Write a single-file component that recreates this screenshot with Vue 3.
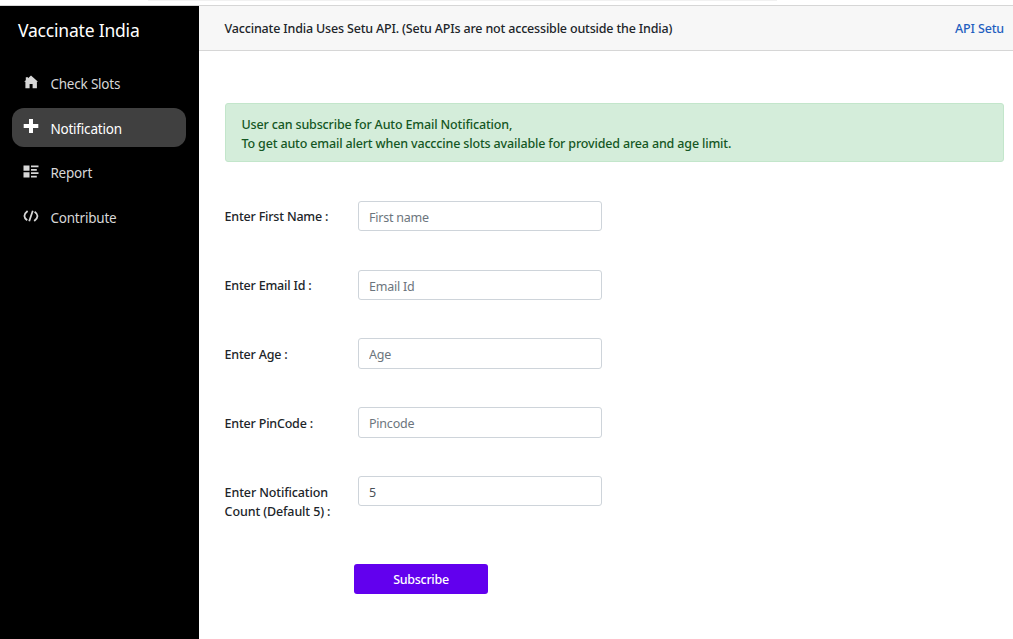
<script setup>
import { ref } from 'vue'

const links = [
  { name: 'Check Slots', icon: 'home', cls: 'slots' },
  { name: 'Notification', icon: 'plus', cls: 'notification', active: true },
  { name: 'Report', icon: 'report', cls: 'report' },
  { name: 'Contribute', icon: 'code', cls: 'contribute' },
]

const fields = ref([
  { id: 'first', label: 'Enter First Name :', placeholder: 'First name', value: '' },
  { id: 'email', label: 'Enter Email Id :', placeholder: 'Email Id', value: '' },
  { id: 'age', label: 'Enter Age :', placeholder: 'Age', value: '' },
  { id: 'pin', label: 'Enter PinCode :', placeholder: 'Pincode', value: '' },
  { id: 'count', label: 'Enter Notification Count (Default 5) :', placeholder: '', value: '5' },
])
</script>

<template>
  <div class="page">
    <div class="edge"><div class="edge-strip"></div></div>
    <div class="shell">
      <aside class="sidebar">
        <div class="brand"><span>Vaccinate India</span></div>
        <nav>
          <a v-for="l in links" :key="l.name" class="link" :class="[l.cls, { active: l.active }]">
            <svg class="icon" width="16" height="16" viewBox="0 0 16 16" fill="currentColor">
              <path v-if="l.icon === 'home'" d="M8 1.4 L15 7.8 H13.9 V14.2 H9.6 V10 H6.6 V14.2 H2.4 V7.8 H1.2 L2.8 6.2 V3.2 H5 V4.2 Z" />
              <path v-else-if="l.icon === 'plus'" d="M6 1 H10 V6 H15.3 V10 H10 V15 H6 V10 H0.7 V6 H6 Z" />
              <path v-else-if="l.icon === 'report'" d="M.5 2.5H6.5V7.8H.5ZM.5 9.2H6.5V14.5H.5ZM8 2.5H15.5V4.3H8ZM8 6H13.8V7.8H8ZM8 9.2H15.5V11H8ZM8 12.7H13.8V14.5H8Z" />
              <path v-else d="M4.6 3 Q1.4 5.5 1.4 8 Q1.4 10.2 4.2 12.3 M9.8 2.7 L6.2 13.3 M11.6 3.7 Q14.5 5.8 14.5 8 Q14.5 10.5 11.2 13" fill="none" stroke="currentColor" stroke-width="1.8" />
            </svg>
            <span>{{ l.name }}</span>
          </a>
        </nav>
      </aside>
      <main class="main">
        <header class="topbar">
          <span class="notice">Vaccinate India Uses Setu API. (Setu APIs are not accessible outside the India)</span>
          <a class="api">API Setu</a>
        </header>
        <section class="content">
          <div class="alert">
            <div class="first-line">User can subscribe for Auto Email Notification,</div>
            <div class="second-line">To get auto email alert when vacccine slots available for provided area and age limit.</div>
          </div>
          <form @submit.prevent>
            <div v-for="f in fields" :key="f.id" class="row" :class="f.id">
              <label :for="f.id">{{ f.label }}</label>
              <input :id="f.id" v-model="f.value" type="text" :placeholder="f.placeholder" />
            </div>
            <button type="submit">Subscribe</button>
          </form>
        </section>
      </main>
    </div>
  </div>
</template>

<style>
body {
  margin: 0;
  background: #fff;
}
</style>

<style scoped>
.page {
  width: 1013px;
  height: 639px;
  overflow: hidden;
  display: flex;
  flex-direction: column;
  box-sizing: border-box;
  font-family: "Noto Sans", "Open Sans", sans-serif;
  font-size: 12.5px;
  line-height: 19px;
  font-weight: 500;
  letter-spacing: -0.2px;
  color: #212529;
}
.edge {
  height: 5px;
  border-bottom: 1px solid #d6d6d6;
}
.edge-strip {
  height: 1px;
  width: 629px;
  margin-left: 148px;
  background: #f1f1f1;
}
.shell {
  flex: 1;
  display: flex;
}
.sidebar {
  width: 199px;
  background: #000;
  flex: none;
}
.brand {
  height: 49px;
  padding-left: 18px;
  line-height: 49px;
  font-size: 17.5px;
  font-weight: 400;
  color: #fff;
}
nav {
  display: flex;
  flex-direction: column;
  gap: 5.7px;
  padding: 8.3px 13px 0 12px;
}
.link {
  height: 39px;
  border-radius: 12px;
  display: flex;
  align-items: center;
  padding-left: 11.4px;
  font-size: 13.5px;
  font-weight: 400;
  color: #d7d7d7;
}
.link.active {
  background: #404040;
  color: #fff;
}
.icon {
  margin: -2px 11px 0 0;
}
.link span {
  padding-top: 3.6px;
}
.main {
  flex: 1;
}
.topbar {
  height: 44px;
  padding: 0 9px 0 25.6px;
  background: #f7f7f7;
  border-bottom: 1px solid #d6d6d6;
  display: flex;
  align-items: center;
  justify-content: space-between;
}
.notice {
  letter-spacing: -0.175px;
}
.api {
  color: #1f5fc0;
  letter-spacing: -0.15px;
}
.content {
  padding: 52px 9px 0 26px;
}
.alert {
  height: 46px;
  padding: 11px 16px 0 15.5px;
  border: 1px solid #c3e6cb;
  border-radius: 3px;
  background: #d4edda;
  color: #155724;
  letter-spacing: -0.158px;
}
form {
  padding-top: 38.8px;
}
.row {
  display: flex;
  height: 68.75px;
}
label {
  width: 115.4px;
  margin: 0 18px 0 -0.4px;
  padding-top: 6.6px;
}
.count label {
  padding-top: 7.2px;
  letter-spacing: -0.12px;
}
input {
  box-sizing: border-box;
  width: 244px;
  height: 30.5px;
  padding: 2.6px 10px 0;
  border: 1px solid #ced4da;
  border-radius: 3px;
  font: inherit;
  font-weight: 400;
  letter-spacing: -0.22px;
  color: #495057;
  background: #fff;
}
input::placeholder {
  color: #6c757d;
  opacity: 1;
}
button {
  display: block;
  margin: 19.3px 0 0 129px;
  width: 134px;
  height: 30px;
  padding: 2px 0 0;
  border: 0;
  border-radius: 3px;
  background: #6200ee;
  color: #fff;
  font: inherit;
  letter-spacing: -0.3px;
}
</style>
